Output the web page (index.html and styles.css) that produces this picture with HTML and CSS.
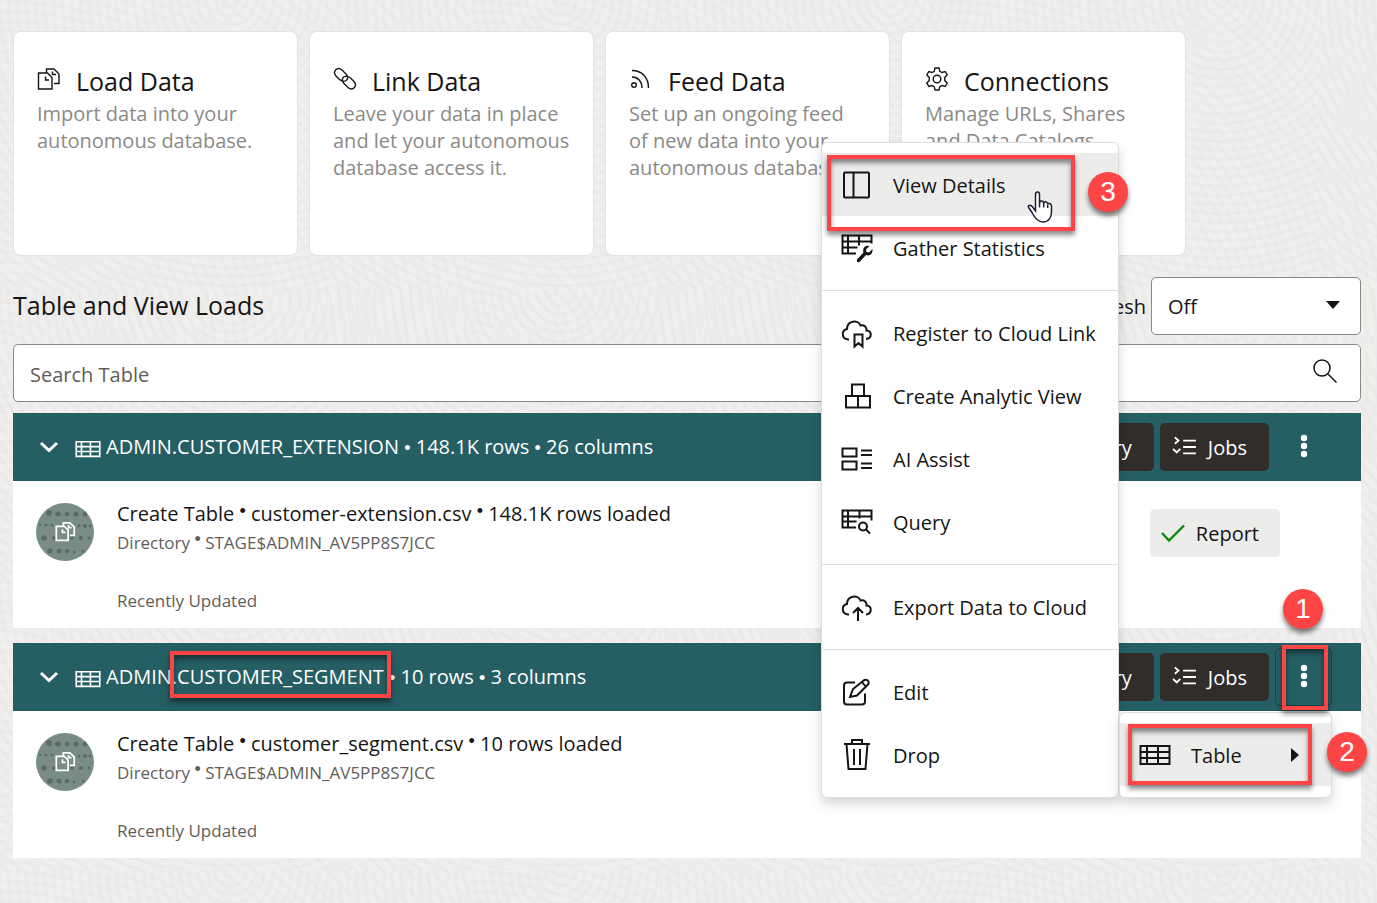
FILE: index.html
```html
<!DOCTYPE html>
<html lang="en">
<head>
<meta charset="utf-8">
<title>Data Load</title>
<link rel="stylesheet" href="styles.css">
</head>
<body>
<svg class="defs" aria-hidden="true">
  <symbol id="i-files" viewBox="0 0 24 24"><path d="M1.500 6h9l4.500 4.500v11.500h-13.500zM9.500 5.500v-3.500h7.500l5 5v9.500h-5M8.500 9.500v3.500h3.500M15.500 4.500v3h3.500"/></symbol>
  <symbol id="i-link" viewBox="0 0 24 24"><path d="M11.500 14c-2 .3-3.500 0-5-1.500l-3.500-3.500c-4-4.500 1.500-10 6-6l4 4c2.500 2.500 2 5 .3 6.500-.8.600-1.300.8-1.800.5M12.500 9.500c2-.3 3.500 0 5 1.500l3.500 3.500c4 4.500-1.500 10-6 6l-4-4c-2.500-2.500-2-5-.3-6.500.8-.6 1.300-.8 1.800-.5"/></symbol>
  <symbol id="i-feed" viewBox="0 0 24 24"><circle cx="5" cy="18" r="2.300"/><path d="M3 10c6 0 10 4.500 10 11M3 3.500c10 0 16.500 7 16.500 17.500"/></symbol>
  <symbol id="i-gear" viewBox="0 0 24 24"><circle cx="12" cy="12" r="3.800"/><path d="M10 1h4l.8 3.300 2.200 1.200 3.200-1 2 3.500-2.400 2.400v3.200l2.400 2.400-2 3.500-3.200-1-2.200 1.200-.8 3.300h-4l-.8-3.300-2.200-1.200-3.200 1-2-3.500 2.400-2.400v-3.200l-2.400-2.400 2-3.500 3.200 1 2.200-1.200z"/></symbol>
  <symbol id="i-table" viewBox="0 0 32 32"><path d="M1.500 7h29v18h-29zM1.500 13h29M1.500 19h29M8 7v18M19 7v18"/></symbol>
  <symbol id="i-panel" viewBox="0 0 32 32"><rect x="3" y="3.500" width="25" height="25" rx="1"/><path d="M12.500 3.500v25"/></symbol>
  <symbol id="i-tablewrench" viewBox="0 0 32 32"><path d="M15 21.500h-13.500v-18h29v8M1.500 9.500h29M1.500 15.500h15M7 3.500v18M18 3.500v10"/><path class="solid" d="M16 27.500l6.500-7c-1.500-4 1.500-7.500 6-6.500l-3.500 3.500.5 2.500 2.500.5 3.500-3.500c.5 5-3 7.500-6.500 6l-6.500 7q-3.500 1-2.500-2.500z"/></symbol>
  <symbol id="i-cloudmark" viewBox="0 0 32 32"><path d="M8 22.500h-1c-7-1-6.500-9.500-1-10.500 0-8 11-10 13.500-3.500 4-1 6.500 2 6 5 5.500 0 6 8-.5 8.500M13.500 17.500h8v12l-4-3.500-4 3.500z"/></symbol>
  <symbol id="i-cloudup" viewBox="0 0 32 32"><path d="M8 23.500h-1c-7-1-6.500-9.500-1-10.500 0-8 11-10 13.500-3.500 4-1 6.500 2 6 5 5.500 0 6 8-.5 9M17 30v-13M12 22l5-5 5 5"/></symbol>
  <symbol id="i-cubes" viewBox="0 0 32 32"><path d="M11 4.500h12v11.500h-12zM5 16h24v11.500h-24zM17 16v11.500"/></symbol>
  <symbol id="i-ai" viewBox="0 0 32 32"><path d="M1.500 5.500h14v8h-14zM1.500 18.500h14v8h-14zM20 7.500h11M20 12h11M20 20.500h11M20 25h11"/></symbol>
  <symbol id="i-tablefind" viewBox="0 0 32 32"><path d="M15 21.500h-13.500v-17h29v10M1.500 10.500h29M1.500 15.500h14M7 4.500v17M18.500 4.500v8"/><circle cx="22" cy="20.500" r="4"/><path d="M25 23.500l4 4"/></symbol>
  <symbol id="i-edit" viewBox="0 0 32 32"><path d="M14 6.500h-8q-3 0-3 3v16q0 3 3 3h15q3 0 3-3v-8M9 21l3-8 11.500-9q2.500-1 4 1.500.5 2-.5 3l-11 11zM21 6l4 5"/></symbol>
  <symbol id="i-trash" viewBox="0 0 32 32"><path d="M3 5h26M11 5v-4h10v4M5.500 5l2 25h17l2-25M13 10v16M19 10v16"/></symbol>
  <symbol id="i-jobs" viewBox="0 0 28 24"><path d="M4 1.500l4 3.500-4 3.500M2 14l4 4 4-4M13 5h14M13 12h14M13 19h14"/></symbol>
  <symbol id="i-dots" viewBox="0 0 8 24"><g class="solid"><circle cx="4" cy="4" r="3.200"/><circle cx="4" cy="12" r="3.200"/><circle cx="4" cy="20" r="3.200"/></g></symbol>
  <symbol id="i-chev" viewBox="0 0 20 12"><path d="M2 2l8 7.500 8-7.500"/></symbol>
  <symbol id="i-source" viewBox="0 0 58 58"><g class="specks"><circle cx="13" cy="10" r="3"/><ellipse cx="22" cy="11" rx="3" ry="2.500"/><circle cx="31" cy="11" r="2.300"/><circle cx="40" cy="11" r="2.500"/><circle cx="49" cy="11" r="2.500"/><circle cx="4" cy="22" r="1.200"/><circle cx="10" cy="22" r="1.500"/><circle cx="16" cy="22" r="1.500"/><circle cx="43" cy="23" r="1.500"/><circle cx="49" cy="23" r="2"/><circle cx="54" cy="23" r="1.500"/><circle cx="8" cy="35" r="2.700"/><circle cx="18" cy="35" r="2"/><circle cx="36" cy="35" r="1.800"/><circle cx="45" cy="35" r="2"/><circle cx="53" cy="35" r="1.500"/><circle cx="14" cy="48" r="2.800"/><circle cx="23" cy="48" r="2.500"/><circle cx="31" cy="48" r="2.200"/><circle cx="38" cy="49" r="1.500"/><circle cx="47" cy="48" r="1.500"/></g></symbol>
</svg>
<main class="page">
  <nav class="cards" aria-label="Data tools">
    <a class="card" href="#load"><h2><svg><use href="#i-files"/></svg>Load Data</h2><p>Import data into your autonomous database.</p></a>
    <a class="card" href="#link"><h2><svg><use href="#i-link"/></svg>Link Data</h2><p>Leave your data in place and let your autonomous database access it.</p></a>
    <a class="card" href="#feed"><h2><svg><use href="#i-feed"/></svg>Feed Data</h2><p>Set up an ongoing feed of new data into your autonomous database.</p></a>
    <a class="card" href="#connections"><h2><svg><use href="#i-gear"/></svg>Connections</h2><p>Manage URLs, Shares and Data Catalogs.</p></a>
  </nav>

  <div class="heading">
    <h1>Table and View Loads</h1>
    <label for="refresh">Auto Refresh</label>
    <div class="select">
      <select id="refresh"><option>Off</option></select>
      <svg class="caret" viewBox="0 0 14 8"><path class="solid" d="M0 0h14l-7 8z"/></svg>
    </div>
  </div>

  <div class="search">
    <input type="text" placeholder="Search Table" aria-label="Search Table">
    <svg viewBox="0 0 24 24"><circle cx="9" cy="9" r="8"/><path d="M15 15l8.500 8.500"/></svg>
  </div>

  <section class="load">
    <header class="bar">
      <button class="toggle" aria-label="Collapse"><svg><use href="#i-chev"/></svg></button>
      <h3><svg><use href="#i-table"/></svg>ADMIN.CUSTOMER_EXTENSION <span class="dot">•</span> 148.1K rows <span class="dot">•</span> 26 columns</h3>
      <button class="action">Query</button>
      <button class="action"><svg><use href="#i-jobs"/></svg>Jobs</button>
      <div class="more"><button class="kebab" aria-label="Actions"><svg><use href="#i-dots"/></svg></button></div>
    </header>
    <div class="job">
      <div class="source"><svg class="dots"><use href="#i-source"/></svg><svg class="files"><use href="#i-files"/></svg></div>
      <div class="info">
        <p class="main">Create Table <sup>•</sup> customer-extension.csv <sup>•</sup> 148.1K rows loaded</p>
        <p>Directory <sup>•</sup> STAGE$ADMIN_AV5PP8S7JCC</p>
        <p class="status">Recently Updated</p>
      </div>
      <button class="report"><svg viewBox="0 0 24 18"><path d="M1 9l7 7.500 15-15"/></svg>Report</button>
    </div>
  </section>

  <section class="load">
    <header class="bar">
      <button class="toggle" aria-label="Collapse"><svg><use href="#i-chev"/></svg></button>
      <h3><svg><use href="#i-table"/></svg>ADMIN<span class="marked">.CUSTOMER_SEGMENT<i class="mark mark-name"></i></span> <span class="dot">•</span> 10 rows <span class="dot">•</span> 3 columns</h3>
      <button class="action">Query</button>
      <button class="action"><svg><use href="#i-jobs"/></svg>Jobs</button>
      <div class="more">
        <button class="kebab open" aria-label="Actions"><svg><use href="#i-dots"/></svg></button>
        <div class="menus">
          <div class="menu menu-details" role="menu">
            <div class="marked">
              <button class="item active" role="menuitem"><svg><use href="#i-panel"/></svg>View Details</button>
              <i class="mark mark-view"></i><b class="step step-view">3</b>
              <svg class="pointer" viewBox="0 0 26 32"><path d="M8.500 20v-16.500q0-2.500 2-2.500t2 2.500v9q0-2.500 2-2.500t2.200 2.500q.3-2 2-1.700t2 2.700q.5-1.500 2-1t1.800 2.500v6c0 5-2.500 10-8.500 10-5 0-8-3.500-11-9.500l-3-4.500q-1.500-2 .2-2.500 1.300-.5 3 1zM12.500 12.500v4M16.700 12.500v4M20.700 14v3"/></svg>
            </div>
            <button class="item" role="menuitem"><svg><use href="#i-tablewrench"/></svg>Gather Statistics</button>
            <hr>
            <button class="item" role="menuitem"><svg><use href="#i-cloudmark"/></svg>Register to Cloud Link</button>
            <button class="item" role="menuitem"><svg><use href="#i-cubes"/></svg>Create Analytic View</button>
            <button class="item" role="menuitem"><svg><use href="#i-ai"/></svg>AI Assist</button>
            <button class="item" role="menuitem"><svg><use href="#i-tablefind"/></svg>Query</button>
            <hr>
            <button class="item" role="menuitem"><svg><use href="#i-cloudup"/></svg>Export Data to Cloud</button>
            <hr>
            <button class="item" role="menuitem"><svg><use href="#i-edit"/></svg>Edit</button>
            <button class="item" role="menuitem"><svg><use href="#i-trash"/></svg>Drop</button>
          </div>
          <div class="menu menu-table" role="menu">
            <div class="marked">
              <button class="item active" role="menuitem"><svg><use href="#i-table"/></svg>Table<svg class="arrow" viewBox="0 0 8 14"><path class="solid" d="M0 0v14l8-7z"/></svg></button>
              <i class="mark mark-table"></i><b class="step step-table">2</b>
            </div>
          </div>
        </div>
        <i class="mark mark-more"></i><b class="step step-more">1</b>
      </div>
    </header>
    <div class="job">
      <div class="source"><svg class="dots"><use href="#i-source"/></svg><svg class="files"><use href="#i-files"/></svg></div>
      <div class="info">
        <p class="main">Create Table <sup>•</sup> customer_segment.csv <sup>•</sup> 10 rows loaded</p>
        <p>Directory <sup>•</sup> STAGE$ADMIN_AV5PP8S7JCC</p>
        <p class="status">Recently Updated</p>
      </div>
    </div>
  </section>
</main>
</body>
</html>
```
FILE: styles.css
```css
* { box-sizing: border-box; }
body {
  margin: 0;
  min-height: 100vh;
  color: #161513;
  font: 20px/27px "Open Sans", "Noto Sans", sans-serif;
  background-color: #f0efed;
  background-image:
    repeating-radial-gradient(circle at 70% 0, transparent 0 4px, rgba(0, 0, 0, .014) 6px 7px, transparent 9px),
    repeating-radial-gradient(circle at 0 90%, transparent 0 5px, rgba(0, 0, 0, .012) 7px 8px, transparent 10px);
  background-size: 330px 290px, 470px 410px;
}
h1, h2, h3, p { margin: 0; font-weight: 400; }
button, input, select { font: inherit; color: inherit; }
button { border: 0; padding: 0; background: none; }
svg { flex: none; fill: none; stroke: currentColor; stroke-width: 2; }
.solid { fill: currentColor; stroke: none; }
.defs { position: absolute; width: 0; height: 0; }

.page { padding: 31px 16px 40px 13px; }

.cards { display: flex; gap: 11px; margin-bottom: 21px; }
.card {
  flex: 0 1 285px;
  min-height: 225px;
  padding: 32px 23px 24px;
  border: 1px solid #e3e2e0;
  border-radius: 8px;
  background: #fff;
  color: #8b8a88;
  text-decoration: none;
}
.card h2 { display: flex; align-items: center; gap: 15px; padding-bottom: 2px; font-size: 25px; line-height: 34px; color: #161513; }
.card h2 svg { width: 24px; height: 24px; stroke-width: 1.4; margin-bottom: 4px; }

.heading { display: flex; align-items: center; gap: 5px; margin-bottom: 9px; }
.heading h1 { flex: 1; padding-bottom: 2px; font-size: 25px; line-height: 34px; }
.select { position: relative; width: 210px; }
.select select {
  appearance: none;
  display: block;
  width: 100%;
  height: 58px;
  padding: 0 16px;
  border: 1px solid #8b8986;
  border-radius: 5px;
  background: #fff;
}
.caret { position: absolute; right: 21px; top: 24px; width: 14px; height: 8px; }

.search {
  display: flex;
  align-items: center;
  height: 58px;
  margin-bottom: 11px;
  padding: 0 23px 0 16px;
  border: 1px solid #8b8986;
  border-radius: 5px;
  background: #fff;
}
.search input { flex: 1; min-width: 0; padding: 2px 0 0; border: 0; outline: 0; background: none; }
.search input::placeholder { color: #5f5d5a; opacity: 1; }
.search svg { width: 24px; height: 24px; stroke-width: 1.5; margin-bottom: 4px; }

.load { margin-bottom: 15px; background: #fff; }
.bar { display: flex; align-items: center; gap: 6px; height: 68px; padding: 0 29px 0 26px; background: #255e63; color: #fff; }
.toggle { display: flex; width: 20px; margin-right: 10px; }
.toggle svg { width: 20px; height: 12px; stroke-width: 3; }
.bar h3 { flex: 1; display: block; font-size: 20px; line-height: 30px; white-space: nowrap; }
.bar h3 > svg { width: 26px; height: 26px; margin-right: 5px; vertical-align: middle; }
.dot, .info sup { font-family: "Liberation Sans", sans-serif; font-size: 18px; line-height: 0; }
.action { display: flex; align-items: center; gap: 11px; height: 48px; padding: 0 22px 0 11px; border-radius: 5px; background: #312d2a; }
.action svg { width: 26px; height: 22px; }
.more { position: relative; }
.kebab { display: flex; align-items: center; justify-content: center; width: 57px; height: 58px; padding-bottom: 2px; border: 1px solid transparent; border-radius: 5px; }
.kebab.open { border-color: #1a4146; }
.kebab svg { width: 8px; height: 24px; }

.job { display: flex; align-items: flex-start; padding: 18px 81px 13px 23px; }
.source { display: grid; place-items: center; width: 58px; height: 58px; margin: 4px 23px 0 0; border-radius: 50%; background: #7a8c88; overflow: hidden; color: #fff; }
.source svg { grid-area: 1 / 1; }
.dots { width: 58px; height: 58px; }
.specks { fill: #5d6b67; stroke: none; }
.files { width: 21px; height: 21px; margin-bottom: 2px; }
.info { flex: 1; color: #5f5d5a; font-size: 17px; line-height: 29px; }
.info .main { color: #161513; font-size: 20px; }
.info .status { margin-top: 29px; }
.info sup { vertical-align: 4px; }
.report { display: flex; align-items: center; gap: 11px; height: 48px; margin-top: 10px; padding: 0 21px 0 11px; border-radius: 5px; background: #ececeb; }
.report svg { width: 24px; height: 18px; color: #0a8a0a; stroke-width: 2.400; }

.menus { position: absolute; right: 0; bottom: -92px; z-index: 1; display: flex; align-items: flex-end; color: #161513; }
.menu { padding: 10px 0 11px; border: 1px solid #dedddb; border-radius: 6px; background: #fff; box-shadow: 0 6px 12px rgba(0, 0, 0, .16); }
.menu-details { width: 298px; }
.menu-table { width: 213px; }
.item { display: flex; align-items: center; gap: 20px; width: 100%; height: 63px; padding: 2px 20px 0 19px; white-space: nowrap; }
.item.active { background: #ececeb; }
.item svg { width: 32px; height: 32px; margin-bottom: 2px; }
.item .arrow { width: 8px; height: 14px; margin: 0 12px 2px auto; }
.menu hr { height: 1px; margin: 11px 0 10px; border: 0; background: #dedddb; }

.marked { position: relative; }
.mark { position: absolute; border: 4px solid #fe4545; box-shadow: 0 4px 5px rgba(0, 0, 0, .45), inset 0 4px 5px rgba(0, 0, 0, .45); pointer-events: none; }
.mark-name { inset: -12px -7px -8px -2px; }
.mark-more { inset: -3px 4px -4px 7px; z-index: 2; }
.mark-table { inset: 1px 19px 1px 8px; }
.mark-view { inset: 2px 43px -15px 5px; }
.step {
  position: absolute;
  z-index: 2;
  width: 40px;
  height: 40px;
  border-radius: 50%;
  background: #fe4545;
  box-shadow: 0 4px 5px rgba(0, 0, 0, .5);
  color: #fff;
  font: 28px/40px "Liberation Sans", sans-serif;
  text-align: center;
}
.step-more { left: 8px; top: -59px; }
.step-table { right: -36px; top: 9px; }
.step-view { right: -10px; top: 19px; }
.pointer { position: absolute; right: 65px; top: 38px; width: 26px; height: 32px; fill: #fff; stroke: #1f1f33; stroke-width: 1.500; }
```
